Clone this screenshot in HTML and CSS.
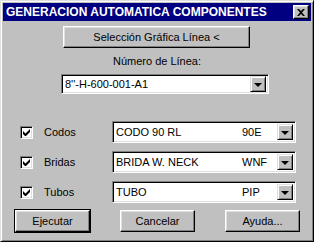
FILE: index.html
```html
<!DOCTYPE html>
<html>
<head>
  <title>Generacion Automatica Componentes</title>
  <link rel="stylesheet" href="styles.css">
</head>
<body>
  <div class="window">
    <div class="titlebar">
      <span class="title">GENERACION AUTOMATICA COMPONENTES</span>
      <button class="close">
        <svg width="8" height="7" viewBox="0 0 8 7"><path d="M0 0h2l2 2 2-2h2L5 3.5 8 7H6L4 5 2 7H0l3-3.5z" fill="#000"/></svg>
      </button>
    </div>
    <div class="content">
      <button class="btn select-btn">Selección Gráfica Línea &lt;</button>
      <div class="caption">Número de Línea:</div>
      <div class="field line-field">
        <span class="value">8''-H-600-001-A1</span>
        <span class="drop"><span class="arrow"></span></span>
      </div>

      <div class="rows">
        <div class="row">
          <span class="check"><svg width="7" height="7" viewBox="0 0 7 7"><path d="M0 2v3l2 2h1l4-4V0L2.5 4.5z" fill="#000"/></svg></span>
          <span class="label">Codos</span>
          <div class="field comp-field">
            <span class="name">CODO 90 RL</span>
            <span class="code">90E</span>
            <span class="drop"><span class="arrow"></span></span>
          </div>
        </div>
        <div class="row">
          <span class="check"><svg width="7" height="7" viewBox="0 0 7 7"><path d="M0 2v3l2 2h1l4-4V0L2.5 4.5z" fill="#000"/></svg></span>
          <span class="label">Bridas</span>
          <div class="field comp-field">
            <span class="name">BRIDA W. NECK</span>
            <span class="code">WNF</span>
            <span class="drop"><span class="arrow"></span></span>
          </div>
        </div>
        <div class="row">
          <span class="check"><svg width="7" height="7" viewBox="0 0 7 7"><path d="M0 2v3l2 2h1l4-4V0L2.5 4.5z" fill="#000"/></svg></span>
          <span class="label">Tubos</span>
          <div class="field comp-field">
            <span class="name">TUBO</span>
            <span class="code">PIP</span>
            <span class="drop"><span class="arrow"></span></span>
          </div>
        </div>
      </div>

      <div class="actions">
        <button class="btn action default">Ejecutar</button>
        <button class="btn action">Cancelar</button>
        <button class="btn action">Ayuda...</button>
      </div>
    </div>
  </div>
</body>
</html>
```

FILE: styles.css
```css
body {
  margin: 0;
  padding: 0;
  background-color: #c0c0c0;
  font-family: "Liberation Sans", Arial, sans-serif;
  font-size: 11px;
  color: #000;
}

.window {
  width: 314px;
  height: 242px;
  box-sizing: border-box;
  padding: 2px;
  background-color: #c0c0c0;
  border: 1px solid;
  border-color: #dfdfdf #000 #000 #dfdfdf;
  box-shadow: inset 1px 1px #fff, inset -1px -1px #808080;
}

.titlebar {
  height: 18px;
  background-color: #000080;
  display: flex;
  align-items: center;
  justify-content: space-between;
  padding: 0 2px 0 3px;
}

.title {
  color: #fff;
  font-weight: bold;
  font-size: 12px;
  white-space: nowrap;
}

button {
  font-family: inherit;
  font-size: inherit;
  color: #000;
  margin: 0;
  padding: 0;
  background-color: #c0c0c0;
  border: 1px solid;
  border-color: #fff #000 #000 #fff;
  box-shadow: inset -1px -1px #808080, inset 1px 1px #dfdfdf;
}

.close {
  width: 16px;
  height: 14px;
  display: flex;
  align-items: center;
  justify-content: center;
}

.content {
  display: flex;
  flex-direction: column;
}

.select-btn {
  width: 187px;
  height: 22px;
  margin: 5px 0 0 60px;
}

.caption {
  text-align: center;
  margin-top: 6px;
  height: 14px;
  line-height: 14px;
}

.field {
  background-color: #fff;
  border: 1px solid;
  border-color: #808080 #fff #fff #808080;
  box-shadow: inset 1px 1px #000, inset -1px -1px #dfdfdf;
  display: flex;
  align-items: center;
  box-sizing: border-box;
  padding: 2px 2px 2px 3px;
}

.line-field {
  width: 208px;
  height: 20px;
  margin: 6px 0 0 58px;
}

.field .value,
.field .name {
  flex: 1;
}

.drop {
  width: 16px;
  height: 16px;
  box-sizing: border-box;
  background-color: #c0c0c0;
  border: 1px solid;
  border-color: #dfdfdf #000 #000 #dfdfdf;
  box-shadow: inset 1px 1px #fff, inset -1px -1px #808080;
  display: flex;
  align-items: center;
  justify-content: center;
}

.arrow {
  width: 0;
  height: 0;
  border-left: 4px solid transparent;
  border-right: 4px solid transparent;
  border-top: 4px solid #000;
  margin-top: 1px;
}

.rows {
  display: flex;
  flex-direction: column;
  gap: 8px;
  margin-top: 27px;
}

.row {
  display: flex;
  align-items: center;
  height: 22px;
}

.check {
  width: 13px;
  height: 13px;
  box-sizing: border-box;
  margin-left: 17px;
  background-color: #fff;
  border: 1px solid;
  border-color: #808080 #fff #fff #808080;
  box-shadow: inset 1px 1px #000, inset -1px -1px #dfdfdf;
  display: flex;
  align-items: center;
  justify-content: center;
}

.label {
  margin-left: 11px;
  width: 68px;
}

.comp-field {
  width: 184px;
  height: 22px;
}

.comp-field .name {
  flex: 0 0 126px;
}

.comp-field .code {
  flex: 1;
}

.actions {
  display: flex;
  margin: 7px 0 0 12px;
  gap: 30px;
}

.action {
  width: 75px;
  height: 22px;
}

.action.default {
  outline: 1px solid #000;
  outline-offset: 0;
}
```
